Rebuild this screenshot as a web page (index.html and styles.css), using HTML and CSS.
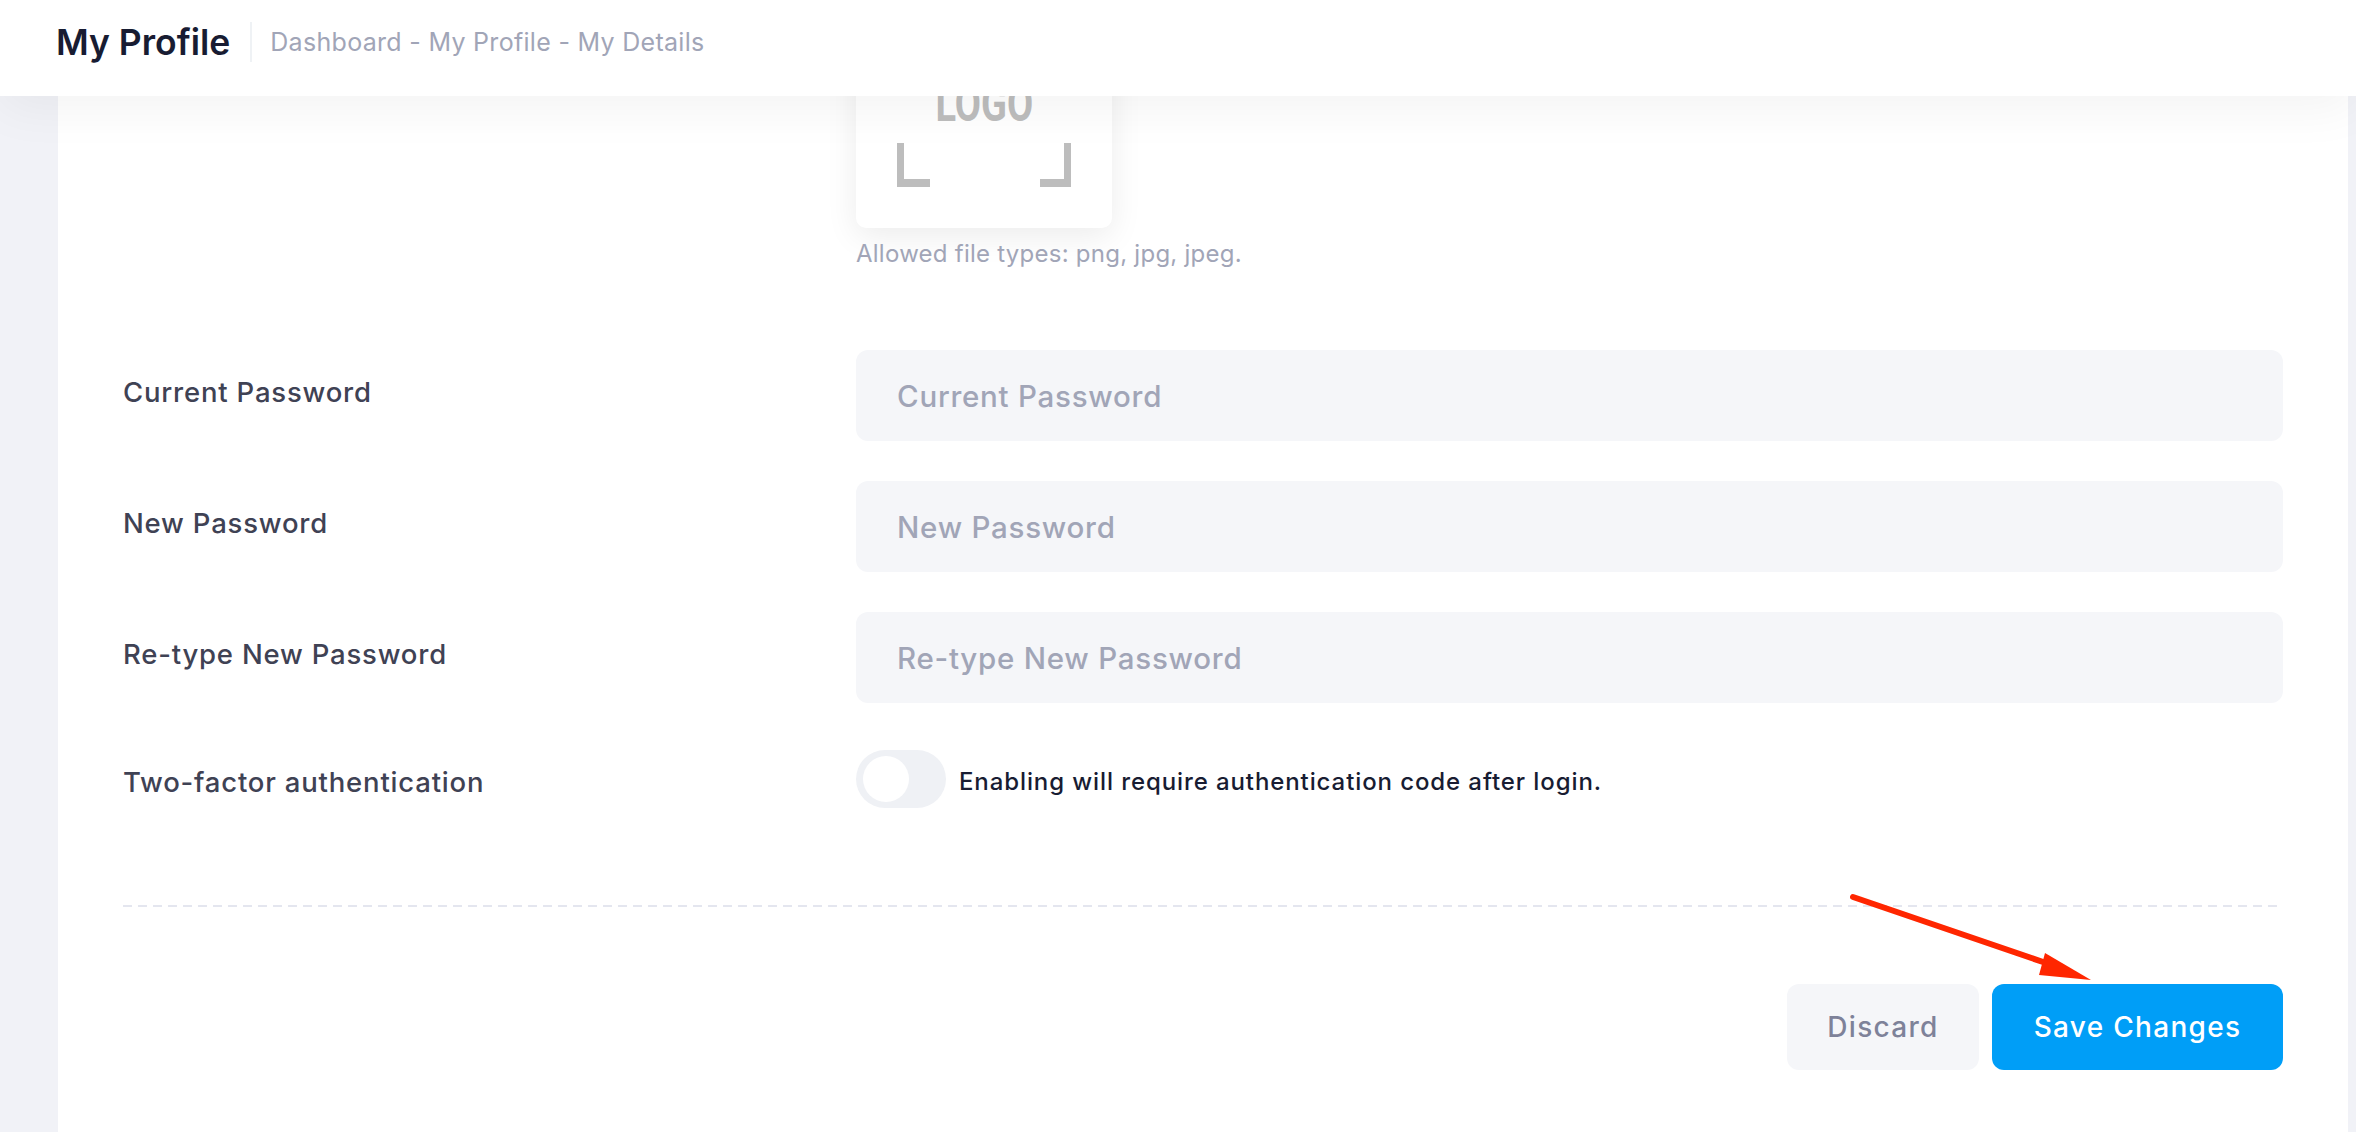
FILE: index.html
```html
<!DOCTYPE html>
<html lang="en">
<head>
  <meta charset="UTF-8">
  <meta name="viewport" content="width=device-width, initial-scale=1.0">
  <title>My Profile</title>
  <link rel="stylesheet" href="styles.css">
</head>
<body>
  <header class="toolbar">
    <h1 class="page-title">My Profile</h1>
    <span class="divider"></span>
    <div class="crumbs">Dashboard - My Profile - My Details</div>
  </header>

  <main class="page">
    <section class="card">
      <!-- Logo upload -->
      <div class="form-row logo-row">
        <div class="form-label"></div>
        <div class="form-field">
          <div class="logo-box">
            <span class="logo-text">LOGO</span>
            <div class="logo-corners">
              <span class="corner left"></span>
              <span class="corner right"></span>
            </div>
          </div>
          <div class="hint">Allowed file types: png, jpg, jpeg.</div>
        </div>
      </div>

      <div class="form-row pw-row first">
        <label class="form-label" for="currentPw">Current Password</label>
        <div class="form-field"><input class="input" type="password" id="currentPw" placeholder="Current Password"></div>
      </div>
      <div class="form-row pw-row">
        <label class="form-label" for="newPw">New Password</label>
        <div class="form-field"><input class="input" type="password" id="newPw" placeholder="New Password"></div>
      </div>
      <div class="form-row pw-row">
        <label class="form-label" for="retypePw">Re-type New Password</label>
        <div class="form-field"><input class="input" type="password" id="retypePw" placeholder="Re-type New Password"></div>
      </div>

      <div class="form-row toggle-row">
        <div class="form-label">Two-factor authentication</div>
        <div class="form-field switch-field">
          <span class="switch"><span class="knob"></span></span>
          <span class="switch-text">Enabling will require authentication code after login.</span>
        </div>
      </div>

      <div class="separator"></div>

      <div class="actions">
        <button type="button" class="btn btn-light">Discard</button>
        <button type="button" class="btn btn-primary">Save Changes</button>
      </div>
    </section>
  </main>

  <!-- annotation arrow -->
  <svg class="annotation" width="2356" height="1132" viewBox="0 0 2356 1132">
    <line x1="1853" y1="897" x2="2046" y2="963" stroke="#ff2600" stroke-width="6" stroke-linecap="round"/>
    <polygon points="2091,980 2045,953 2039,975" fill="#ff2600"/>
  </svg>
</body>
</html>
```

FILE: styles.css
```css
* {
  padding: 0;
  margin: 0;
  box-sizing: border-box;
}

html,
body {
  height: 100%;
}

body {
  position: relative;
  overflow: hidden;
  background-color: #f1f2f7;
  font-family: Inter, "Noto Sans", sans-serif;
  color: #181c32;
}

/* top toolbar */
.toolbar {
  position: relative;
  z-index: 2;
  height: 96px;
  padding: 0 0 12px 56px;
  display: flex;
  align-items: center;
  background-color: #ffffff;
  box-shadow: 0 12px 50px rgba(0, 0, 0, 0.05);
}

.page-title {
  font-size: 35.5px;
  font-weight: 600;
  color: #181c32;
  letter-spacing: 0;
}

.divider {
  width: 2px;
  height: 40px;
  background-color: #eff2f5;
  margin: 0 18px 0 20px;
}

.crumbs {
  font-size: 25px;
  font-weight: 400;
  letter-spacing: 0.3px;
  color: #a1a5b7;
}

/* card */
.page {
  padding: 0 8px 0 58px;
}

.card {
  display: flow-root;
  background-color: #ffffff;
  min-height: calc(100vh - 96px);
  padding: 0 65px;
}

.form-row {
  display: flex;
  align-items: center;
}

.form-label {
  width: 733px;
  flex-shrink: 0;
  font-size: 27.5px;
  font-weight: 500;
  color: #3f4254;
  letter-spacing: 0.8px;
}

.form-field {
  flex: 1;
}

/* logo upload */
.logo-row {
  margin-top: -124px;
  align-items: flex-start;
}

.logo-box {
  width: 256px;
  height: 256px;
  border-radius: 10px;
  background-color: #ffffff;
  box-shadow: 0 8px 32px rgba(0, 0, 0, 0.08);
  display: flex;
  flex-direction: column;
  align-items: center;
  justify-content: flex-end;
  padding-bottom: 41px;
}

.logo-text {
  display: block;
  height: 36px;
  line-height: 36px;
  font-family: Roboto, sans-serif;
  font-size: 50px;
  font-weight: 700;
  color: #bdbdbd;
  transform: scaleX(0.76);
  margin-bottom: 21px;
}

.logo-corners {
  width: 174px;
  display: flex;
  justify-content: space-between;
}

.corner {
  width: 33px;
  height: 44px;
  border-bottom: 8px solid #bdbdbd;
}

.corner.left {
  border-left: 7px solid #bdbdbd;
}

.corner.right {
  width: 31px;
  border-right: 7px solid #bdbdbd;
}

.hint {
  margin-top: 9px;
  font-size: 24px;
  line-height: 34px;
  letter-spacing: 0.25px;
  color: #a1a5b7;
}

/* password inputs */
.pw-row {
  margin-top: 40px;
}

.pw-row.first {
  margin-top: 79px;
}

.pw-row .form-label {
  padding-bottom: 8px;
}

.input {
  width: 100%;
  height: 91px;
  border: none;
  border-radius: 12px;
  background-color: #f5f6f9;
  padding: 0 41px;
  font-family: Inter, "Noto Sans", sans-serif;
  font-size: 29.5px;
  font-weight: 500;
  letter-spacing: 0.75px;
  color: #3f4254;
}

.input::placeholder {
  color: #a1a5b7;
}

.input:focus {
  outline: none;
}

/* two-factor switch */
.toggle-row {
  margin-top: 47px;
}

.toggle-row .form-label {
  padding-top: 5px;
}

.switch-field {
  display: flex;
  align-items: center;
}

.switch {
  width: 90px;
  height: 58px;
  border-radius: 29px;
  background-color: #eff1f5;
  display: flex;
  align-items: center;
  padding-left: 7px;
}

.knob {
  width: 46px;
  height: 46px;
  border-radius: 50%;
  background-color: #ffffff;
}

.switch-text {
  margin-left: 13px;
  padding-top: 5px;
  font-size: 24px;
  font-weight: 500;
  letter-spacing: 0.9px;
  color: #181c32;
}

.separator {
  margin-top: 97px;
  height: 2px;
  background-image: repeating-linear-gradient(90deg, #e4e6ef 0 9px, transparent 9px 15px);
}

/* footer buttons */
.actions {
  margin-top: 77px;
  display: flex;
  justify-content: flex-end;
  gap: 13px;
}

.btn {
  height: 86px;
  border: none;
  border-radius: 12px;
  font-family: Inter, "Noto Sans", sans-serif;
  font-size: 28px;
  font-weight: 500;
  letter-spacing: 1.3px;
  cursor: pointer;
}

.btn-light {
  width: 192px;
  background-color: #f5f6f9;
  color: #7e8299;
}

.btn-primary {
  width: 291px;
  background-color: #009ef7;
  color: #ffffff;
}

.annotation {
  position: absolute;
  left: 0;
  top: 0;
  z-index: 3;
  pointer-events: none;
}
```
